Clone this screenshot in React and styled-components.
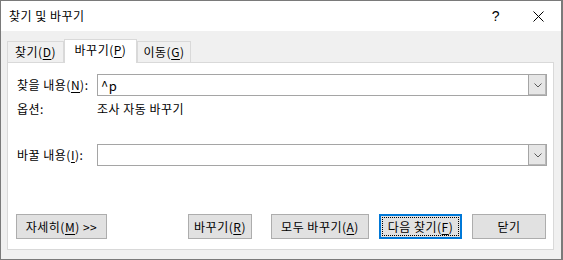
import React from 'react';
import styled, { createGlobalStyle } from 'styled-components';

const GlobalStyle = createGlobalStyle`
    html, body {
        margin: 0;
        padding: 0;
        background: #ffffff;
    }
    body {
        font-family: "Noto Sans CJK KR", "Noto Sans", sans-serif;
        font-size: 12px;
        color: #000000;
    }
`;

const FONT = `"Noto Sans CJK KR", "Noto Sans", sans-serif`;

const Window = styled.div`
    width: 563px;
    height: 260px;
    box-sizing: border-box;
    border: 1px solid #7a7a7a;
    border-right-width: 2px;
    background: #f0f0f0;
    display: flex;
    flex-direction: column;
    font-family: ${FONT};
    font-size: 12px;
    line-height: 1;
    letter-spacing: 0.5px;
`;

const TitleBar = styled.div`
    height: 30px;
    flex-shrink: 0;
    background: #ffffff;
    display: flex;
    align-items: center;
    padding-left: 8px;
`;

const Title = styled.span`
    flex: 1;
    font-size: 12px;
    color: #000000;
`;

const TitleButton = styled.div`
    width: ${props => props.w}px;
    height: 30px;
    display: flex;
    align-items: center;
    justify-content: center;
    font-family: "Liberation Sans", sans-serif;
    font-size: 14px;
    color: #000000;
`;

const Body = styled.div`
    flex: 1;
    display: flex;
    flex-direction: column;
    padding: 8px 7px 9px 6px;
`;

const TabStrip = styled.div`
    display: flex;
    align-items: flex-end;
    height: 23px;
    position: relative;
    z-index: 1;
`;

const Tab = styled.div`
    box-sizing: border-box;
    width: ${props => props.w}px;
    height: ${props => (props.active ? 24 : 21)}px;
    margin-bottom: ${props => (props.active ? -1 : 0)}px;
    padding-bottom: ${props => (props.active ? 3 : 0)}px;
    background: ${props => (props.active ? '#ffffff' : '#f0f0f0')};
    border: 1px solid #d9d9d9;
    border-bottom: none;
    display: flex;
    align-items: center;
    justify-content: center;
    color: #000000;
`;

const Key = styled.span`
    text-decoration: underline;
    text-underline-offset: 2px;
`;

const Panel = styled.div`
    flex: 1;
    background: #ffffff;
    border: 1px solid #d9d9d9;
    display: flex;
    flex-direction: column;
    padding: 11px 6px 10px 9px;
`;

const Form = styled.div`
    display: grid;
    grid-template-columns: 80px 1fr;
    grid-template-rows: 22px 26px 22px 22px;
    align-items: center;
`;

const Label = styled.span`
    white-space: nowrap;
`;

const ComboBox = styled.div`
    box-sizing: border-box;
    height: 22px;
    border: 1px solid #a5a5a5;
    background: #ffffff;
    display: flex;
    align-items: stretch;
`;

const ComboText = styled.div`
    flex: 1;
    display: flex;
    align-items: center;
    padding-left: 3px;
    font-family: ${FONT};
    font-size: 13px;
`;

const DropButton = styled.div`
    width: 17px;
    background: #e6e6e6;
    border-left: 1px solid #a5a5a5;
    box-shadow: inset -1px -1px 0 #b8b8b8;
    display: flex;
    align-items: center;
    justify-content: center;
`;

const ButtonRow = styled.div`
    margin-top: auto;
    display: flex;
    align-items: center;
    padding-right: 1px;
    margin-left: -1px;
`;

const Button = styled.div`
    box-sizing: border-box;
    width: ${props => props.w}px;
    height: 25px;
    margin-left: ${props => props.gap || 0}px;
    background: #e1e1e1;
    border: ${props => (props.primary ? '2px solid #0078d7' : '1px solid #adadad')};
    display: flex;
    align-items: center;
    justify-content: center;
    padding: ${props => (props.primary ? '1px' : '0')};
    white-space: nowrap;
`;

const FocusRect = styled.div`
    flex: 1;
    align-self: stretch;
    border: 1px dotted #000000;
    display: flex;
    align-items: center;
    justify-content: center;
`;

const Spacer = styled.div`
    flex: 1;
`;

const Chevron = () => (
    <svg width="8" height="5" viewBox="0 0 8 5">
        <path d="M0.5 0.5 L4 4 L7.5 0.5" fill="none" stroke="#5a5a5a" strokeWidth="1" />
    </svg>
);

const CloseIcon = () => (
    <svg width="11" height="11" viewBox="0 0 11 11">
        <path d="M0.5 0.5 L10.5 10.5 M10.5 0.5 L0.5 10.5" stroke="#000000" strokeWidth="1" />
    </svg>
);

const App = () => (
    <>
        <GlobalStyle />
        <Window>
            <TitleBar>
                <Title>찾기 및 바꾸기</Title>
                <TitleButton w={38}>?</TitleButton>
                <TitleButton w={46}><CloseIcon /></TitleButton>
            </TitleBar>
            <Body>
                <TabStrip>
                    <Tab w={57}>찾기(<Key>D</Key>)</Tab>
                    <Tab w={73} active>바꾸기(<Key>P</Key>)</Tab>
                    <Tab w={54}>이동(<Key>G</Key>)</Tab>
                </TabStrip>
                <Panel>
                    <Form>
                        <Label>찾을 내용(<Key>N</Key>):</Label>
                        <ComboBox>
                            <ComboText>^p</ComboText>
                            <DropButton><Chevron /></DropButton>
                        </ComboBox>
                        <Label>옵션:</Label>
                        <Label>조사 자동 바꾸기</Label>
                        <span />
                        <span />
                        <Label>바꿀 내용(<Key>I</Key>):</Label>
                        <ComboBox>
                            <ComboText />
                            <DropButton><Chevron /></DropButton>
                        </ComboBox>
                    </Form>
                    <ButtonRow>
                        <Button w={91}>자세히(<Key>M</Key>)&nbsp;&gt;&gt;</Button>
                        <Spacer />
                        <Button w={64}>바꾸기(<Key>R</Key>)</Button>
                        <Button w={98} gap={19}>모두 바꾸기(<Key>A</Key>)</Button>
                        <Button w={83} gap={10} primary>
                            <FocusRect>다음 찾기(<Key>F</Key>)</FocusRect>
                        </Button>
                        <Button w={74} gap={10}>닫기</Button>
                    </ButtonRow>
                </Panel>
            </Body>
        </Window>
    </>
);

export default App;
